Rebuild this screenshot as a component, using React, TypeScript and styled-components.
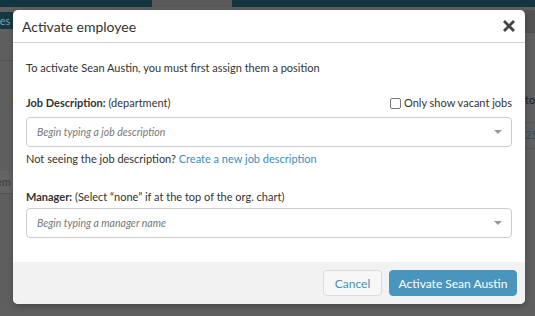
import React from "react";
import styled, { createGlobalStyle } from "styled-components";

const Global = createGlobalStyle`
  html, body { margin: 0; padding: 0; }
  body { width: 535px; height: 316px; overflow: hidden; background: #5f5f5f; font-family: Lato, "Open Sans", sans-serif; }
  * { box-sizing: border-box; }
`;

const Page = styled.div`
  position: relative;
  width: 535px;
  height: 316px;
  background: #5f5f5f;
  display: grid;
  grid-template-columns: 13px 1fr 10px;
  grid-template-rows: 7px 1fr;
`;

const TopBar = styled.div`
  grid-column: 1 / 4;
  display: grid;
  grid-template-columns: 152px 80px 1fr;
`;

const TopSeg = styled.div<{ $dim?: boolean }>`
  background: ${(p) => (p.$dim ? "#5a5a5a" : "#12353f")};
`;

const SideCol = styled.div`
  display: flex;
  flex-direction: column;
  overflow: hidden;
  font-size: 11px;
  color: #1e1e1e;
`;

const PeekButton = styled.div`
  margin-top: 5px;
  height: 17px;
  background: #143943;
  color: #8aa0a6;
  font-size: 11px;
  line-height: 17px;
  white-space: nowrap;
  text-indent: -6px;
`;

const PeekLine = styled.div<{ $mt: number }>`
  margin-top: ${(p) => p.$mt}px;
  height: 1px;
  background: #555;
`;

const PeekMark = styled.div`
  margin-top: 37px;
  margin-left: 11px;
  width: 2px;
  height: 7px;
  background: #7a5a28;
`;

const PeekRow = styled.div<{ $mt: number; $bg?: string }>`
  margin-top: ${(p) => p.$mt}px;
  height: 22px;
  line-height: 22px;
  background: ${(p) => p.$bg || "transparent"};
  white-space: nowrap;
  font-size: 11px;
  color: #3c3c3c;
  text-indent: -4px;
`;

const RightTop = styled.div`
  margin-top: 3px;
  height: 23px;
  background: #535353;
  border-bottom: 1px solid #4f4f4f;
`;

const RightText = styled.div<{ $mt: number; $c: string }>`
  margin-top: ${(p) => p.$mt}px;
  height: 16px;
  line-height: 16px;
  color: ${(p) => p.$c};
  font-size: 11px;
  white-space: nowrap;
`;

const Modal = styled.div`
  position: absolute;
  left: 13px;
  top: 10px;
  width: 512px;
  height: 294px;
  background: #fff;
  border-radius: 5px;
  overflow: hidden;
  display: flex;
  flex-direction: column;
  box-shadow: 0 2px 6px rgba(0, 0, 0, 0.25);
`;

const Header = styled.div`
  height: 33px;
  flex: none;
  display: flex;
  align-items: center;
  justify-content: space-between;
  padding: 0 9px 0 9px;
  border-bottom: 1px solid #cfcfcf;
`;

const Title = styled.div`
  font-size: 14px;
  color: #333;
  margin-top: 0;
`;

const Close = styled.button`
  border: none;
  background: none;
  padding: 0;
  width: 14px;
  height: 14px;
  display: flex;
  margin-top: -1px;
  cursor: pointer;
`;

const Body = styled.div`
  flex: 1;
  padding: 17px 13px 0 13px;
  display: flex;
  flex-direction: column;
  font-size: 11px;
  color: #333;
`;

const Line = styled.div<{ $mt?: number }>`
  line-height: 16px;
  margin-top: ${(p) => p.$mt || 0}px;
`;

const LabelRow = styled.div<{ $mt: number }>`
  display: flex;
  justify-content: space-between;
  align-items: center;
  line-height: 16px;
  margin-top: ${(p) => p.$mt}px;
`;

const Strong = styled.b`
  font-weight: 700;
`;

const CheckLabel = styled.label`
  display: flex;
  align-items: center;
  gap: 3px;
`;

const Check = styled.span`
  width: 11px;
  height: 11px;
  border: 1px solid #767676;
  border-radius: 2px;
  background: #fff;
  display: inline-block;
`;

const Select = styled.div<{ $mt: number }>`
  margin-top: ${(p) => p.$mt}px;
  height: 30px;
  border: 1px solid #ccc;
  border-radius: 4px;
  display: flex;
  align-items: center;
  justify-content: space-between;
  padding: 0 9px 0 10px;
`;

const Placeholder = styled.span`
  font-style: italic;
  font-size: 10.5px;
  color: #777;
`;

const Caret = styled.span`
  width: 0;
  height: 0;
  border-left: 4px solid transparent;
  border-right: 4px solid transparent;
  border-top: 4px solid #999;
`;

const Link = styled.a`
  color: #3a8fc0;
  text-decoration: none;
`;

const Footer = styled.div`
  height: 42px;
  flex: none;
  background: #f2f2f2;
  display: flex;
  justify-content: flex-end;
  align-items: center;
  gap: 7px;
  padding: 0 8px 0 0;
`;

const Button = styled.button<{ $primary?: boolean }>`
  height: 26px;
  border-radius: 4px;
  font-family: Lato, "Open Sans", sans-serif;
  font-size: 12px;
  padding: 0;
  width: ${(p) => (p.$primary ? "128px" : "59px")};
  border: 1px solid ${(p) => (p.$primary ? "#4a95bd" : "#dcdcdc")};
  background: ${(p) => (p.$primary ? "#4a95bd" : "#f7f7f7")};
  color: ${(p) => (p.$primary ? "#fff" : "#4a90b8")};
  font-weight: 400;
  cursor: pointer;
`;

export default function App() {
  return (
    <>
      <Global />
      <Page>
        <TopBar>
          <TopSeg />
          <TopSeg $dim />
          <TopSeg />
        </TopBar>
        <SideCol>
          <PeekButton>ees</PeekButton>
          <PeekLine $mt={31} />
          <PeekMark />
          <PeekRow $mt={66} $bg="#646464">em</PeekRow>
          <PeekLine $mt={0} />
        </SideCol>
        <div />
        <SideCol>
          <RightTop />
          <RightText $mt={59} $c="#1e1e1e">to</RightText>
          <PeekLine $mt={14} />
          <RightText $mt={4} $c="#2d4f66">25</RightText>
          <PeekLine $mt={5} />
        </SideCol>
        <Modal>
          <Header>
            <Title>Activate employee</Title>
            <Close aria-label="Close">
              <svg width="14" height="14" viewBox="0 0 14 14">
                <path d="M2 2 L12 12 M12 2 L2 12" stroke="#444" strokeWidth="2.8" strokeLinecap="butt" />
              </svg>
            </Close>
          </Header>
          <Body>
            <Line>To activate Sean Austin, you must first assign them a position</Line>
            <LabelRow $mt={19}>
              <span>
                <Strong>Job Description:</Strong> (department)
              </span>
              <CheckLabel>
                <Check />
                Only show vacant jobs
              </CheckLabel>
            </LabelRow>
            <Select $mt={6}>
              <Placeholder>Begin typing a job description</Placeholder>
              <Caret />
            </Select>
            <Line $mt={4}>
              Not seeing the job description? <Link href="#">Create a new job description</Link>
            </Line>
            <LabelRow $mt={22}>
              <span>
                <Strong>Manager:</Strong> (Select “none” if at the top of the org. chart)
              </span>
            </LabelRow>
            <Select $mt={3}>
              <Placeholder>Begin typing a manager name</Placeholder>
              <Caret />
            </Select>
          </Body>
          <Footer>
            <Button>Cancel</Button>
            <Button $primary>Activate Sean Austin</Button>
          </Footer>
        </Modal>
      </Page>
    </>
  );
}
